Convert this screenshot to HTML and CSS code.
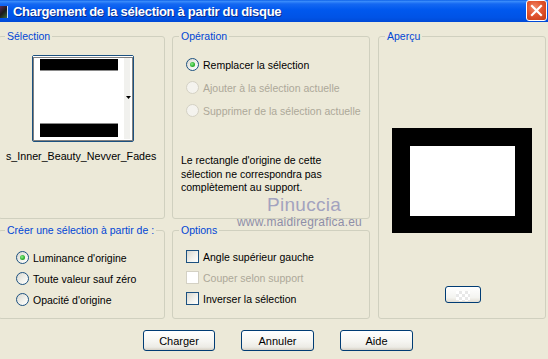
FILE: index.html
```html
<!DOCTYPE html>
<html lang="fr">
<head>
<meta charset="utf-8">
<title>Chargement de la sélection à partir du disque</title>
<link rel="stylesheet" href="styles.css">
</head>
<body>
<div class="titlebar">
  <span class="app-icon"></span>
  <span class="title">Chargement de la sélection à partir du disque</span>
  <span class="close">
    <svg width="21" height="21" viewBox="0 0 21 21"><path d="M6 6 L15 15 M15 6 L6 15" stroke="#fff" stroke-width="2.2" stroke-linecap="square"/></svg>
  </span>
</div>

<div class="content">
  <fieldset class="group g-sel">
    <legend>Sélection</legend>
    <div class="sel-body">
      <div class="thumb">
        <svg width="100" height="85" viewBox="0 0 100 85">
          <rect x="0" y="0" width="100" height="85" fill="#fff"/>
          <rect x="91" y="2" width="6" height="81" fill="#f1f1ee"/>
          <rect x="7" y="3" width="78" height="11" fill="#000"/>
          <rect x="7" y="14" width="78" height="1" fill="#8a8a8a"/>
          <rect x="7" y="67" width="78" height="1" fill="#8a8a8a"/>
          <rect x="7" y="68" width="78" height="13" fill="#000"/>
          <polygon points="93,40 98,40 95.5,43" fill="#000"/>
          <rect x="0.5" y="1.5" width="99" height="83" fill="none" stroke="#000" stroke-width="1" stroke-dasharray="1 1"/>
        </svg>
      </div>
      <div class="filename">s_Inner_Beauty_Nevver_Fades</div>
    </div>
  </fieldset>

  <fieldset class="group g-op">
    <legend>Opération</legend>
    <div class="op-body">
      <div class="opt"><span class="radio checked"></span><span>Remplacer la sélection</span></div>
      <div class="opt disabled"><span class="radio"></span><span>Ajouter à la sélection actuelle</span></div>
      <div class="opt disabled"><span class="radio"></span><span>Supprimer de la sélection actuelle</span></div>
      <p class="note">Le rectangle d'origine de cette<br>sélection ne correspondra pas<br>complètement au support.</p>
    </div>
  </fieldset>

  <fieldset class="group g-prev">
    <legend>Aperçu</legend>
    <div class="prev-body">
      <div class="preview"><div class="preview-inner"></div></div>
      <div class="mini-btn"><span class="checker"></span></div>
    </div>
  </fieldset>

  <fieldset class="group g-create">
    <legend>Créer une sélection à partir de :</legend>
    <div class="create-body">
      <div class="opt2"><span class="radio checked"></span><span>Luminance d'origine</span></div>
      <div class="opt2"><span class="radio"></span><span>Toute valeur sauf zéro</span></div>
      <div class="opt2"><span class="radio"></span><span>Opacité d'origine</span></div>
    </div>
  </fieldset>

  <fieldset class="group g-opts">
    <legend>Options</legend>
    <div class="opts-body">
      <div class="chk-row"><span class="check"></span><span>Angle supérieur gauche</span></div>
      <div class="chk-row disabled"><span class="check"></span><span>Couper selon support</span></div>
      <div class="chk-row"><span class="check"></span><span>Inverser la sélection</span></div>
    </div>
  </fieldset>
</div>

<div class="buttons">
  <button class="btn btn-main">Charger</button>
  <button class="btn">Annuler</button>
  <button class="btn">Aide</button>
</div>

<div class="wm-name">Pinuccia</div>
<div class="wm-url">www.maidiregrafica.eu</div>
</body>
</html>
```

FILE: styles.css
```css
* { box-sizing: border-box; }
html, body { margin: 0; padding: 0; }
body {
  width: 548px;
  height: 359px;
  overflow: hidden;
  position: relative;
  background: #ECE9D8;
  font-family: "Liberation Sans", Arial, sans-serif;
  font-size: 10.5px;
  color: #000;
}

/* title bar */
.titlebar {
  height: 22px;
  display: flex;
  align-items: center;
  background: linear-gradient(to bottom, #0a5ee6 0%, #3a8cfb 6%, #1468f2 18%, #0058ee 45%, #0053e6 80%, #0049d6 100%);
}
.app-icon {
  width: 8px;
  height: 12px;
  margin-top: 1px;
  background: linear-gradient(135deg, #5a2a5a 0%, #1a1a1a 50%, #3a6a3a 100%);
  border-right: 1px solid #c8d8f8;
  flex: none;
}
.title {
  margin-left: 5px;
  color: #fff;
  font-weight: bold;
  font-size: 13px;
  letter-spacing: -0.3px;
  text-shadow: 1px 1px 0 #0a2a8a;
  white-space: nowrap;
}
.close {
  margin-left: auto;
  margin-right: 1px;
  margin-top: -2px;
  width: 21px;
  height: 21px;
  border: 1px solid #fff;
  border-radius: 3px;
  background: radial-gradient(circle at 40% 35%, #f08a6a 0%, #e2542e 45%, #c33a14 100%);
  display: flex;
  flex: none;
}
.close svg { display: block; margin: -1px; }

/* layout */
.content {
  display: grid;
  grid-template-columns: 167px 198px 169px;
  grid-template-rows: 189px 95px;
  column-gap: 7px;
  row-gap: 5px;
  margin: 8px 0 0 -2px;
}
.group {
  margin: 0;
  padding: 0;
  min-width: 0;
  border: 1px solid #D0D0BF;
  border-radius: 3px;
}
.group legend {
  margin-left: 6px;
  padding: 0 2px;
  color: #0046D5;
  line-height: 13px;
  font-size: 10.5px;
}
.g-prev {
  grid-column: 3;
  grid-row: 1 / span 2;
  margin-left: 1px;
}

/* Sélection */
.sel-body { padding: 12px 0 0 33px; }
.thumb {
  width: 102px;
  height: 87px;
  border: 1px solid #1C5180;
  border-radius: 2px;
  background: #fff;
}
.thumb svg { display: block; }
.filename {
  margin: 8px 0 0 -26px;
  line-height: 13px;
  font-size: 10.7px;
  white-space: nowrap;
}

/* Opération */
.op-body { padding: 10px 0 0 8px; }
.opt {
  display: flex;
  align-items: center;
  gap: 4px;
  height: 23px;
  margin-left: 5px;
}
.note {
  margin: 32px 0 0 0;
  line-height: 13.5px;
}

/* radios & checks */
.radio {
  width: 13px;
  height: 13px;
  border: 1px solid #1C5180;
  border-radius: 50%;
  background: linear-gradient(135deg, #D8D7CF 0%, #F3F3EE 60%, #fff 100%);
  display: flex;
  align-items: center;
  justify-content: center;
  flex: none;
}
.radio.checked::after {
  content: "";
  width: 5px;
  height: 5px;
  border-radius: 50%;
  background: radial-gradient(circle at 40% 40%, #8ff08f 0%, #2fb32f 55%, #1a8c1a 100%);
}
.disabled { color: #ACA899; }
.disabled .radio {
  border-color: #D4D1C4;
  background: #F4F3EE;
}
.check {
  width: 13px;
  height: 13px;
  border: 1px solid #1C5180;
  background: linear-gradient(135deg, #D8D7CF 0%, #F3F3EE 60%, #fff 100%);
  flex: none;
}
.disabled .check {
  border-color: #D4D1C4;
  background: #fff;
}

/* Aperçu */
.prev-body { padding: 0; }
.preview {
  width: 140px;
  height: 105px;
  margin: 85px 0 0 13px;
  background: #000;
  padding: 18px 0 0 18px;
}
.preview-inner {
  width: 105px;
  height: 70px;
  background: #fff;
}
.mini-btn {
  width: 36px;
  height: 17px;
  margin: 53px 0 0 66px;
  border: 1px solid #003C74;
  border-radius: 3px;
  background: linear-gradient(to bottom, #fff 0%, #f4f4f0 70%, #e2ded4 100%);
  display: flex;
  align-items: center;
  justify-content: center;
}
.checker {
  width: 14px;
  height: 10px;
  margin-top: 3px;
  background: repeating-conic-gradient(#e8e8e8 0 25%, #fff 0 50%) 0 0 / 6px 6px;
}

/* Créer */
.create-body {
  padding: 10px 0 0 17px;
  display: flex;
  flex-direction: column;
}
.opt2 {
  display: flex;
  align-items: center;
  gap: 4px;
  height: 21px;
}

/* Options */
.opts-body {
  padding: 9px 0 0 13px;
  display: flex;
  flex-direction: column;
}
.chk-row {
  display: flex;
  align-items: center;
  gap: 4px;
  height: 21px;
}

/* buttons */
.buttons {
  display: flex;
  gap: 26px;
  padding-left: 143px;
  margin-top: 11px;
}
.btn {
  width: 73px;
  height: 21px;
  padding: 0;
  border: 1px solid #003C74;
  border-radius: 3px;
  background: linear-gradient(to bottom, #fff 0%, #f5f5f1 55%, #ecebe5 85%, #d6d0c5 100%);
  font-family: "Liberation Sans", Arial, sans-serif;
  font-size: 11px;
  color: #000;
}
.btn-main { width: 72px; }

/* watermark overlay */
.wm-name {
  position: absolute;
  left: 267px;
  top: 194px;
  font-size: 19px;
  color: #a3a3bf;
  letter-spacing: 0.3px;
}
.wm-url {
  position: absolute;
  left: 237px;
  top: 215px;
  font-size: 12px;
  color: #8e8ea8;
  letter-spacing: 0.2px;
}
```
